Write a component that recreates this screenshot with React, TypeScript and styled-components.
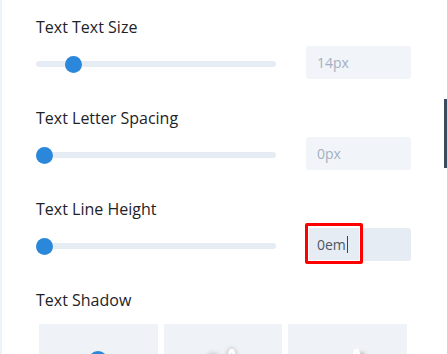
import React from 'react';
import styled, { createGlobalStyle } from 'styled-components';

const GlobalStyle = createGlobalStyle`
  html, body {
    margin: 0;
    padding: 0;
    overflow: hidden;
    background: #ffffff;
  }
`;

const Panel = styled.div`
  position: relative;
  width: 447px;
  height: 354px;
  box-sizing: border-box;
  padding: 17px 36px 0 36px;
  border-left: 2px solid #eaf3fc;
  font-family: "Open Sans", "Noto Sans", sans-serif;
  overflow: hidden;
`;

const Field = styled.div`
  margin-bottom: 29px;
  margin-left: -2px;
`;

const Label = styled.div`
  font-size: 16px;
  line-height: 20px;
  font-weight: 500;
  color: #1e2328;
`;

const Row = styled.div`
  display: flex;
  align-items: center;
  margin-top: 9px;
  gap: 30px;
`;

const Track = styled.div`
  position: relative;
  width: 240px;
  height: 6px;
  margin-top: 3px;
  border-radius: 3px;
  background: #e6ecf3;
`;

const Thumb = styled.div<{ $left: number }>`
  position: absolute;
  top: 50%;
  left: ${p => p.$left}px;
  width: 17px;
  height: 17px;
  margin-top: -8.5px;
  border-radius: 50%;
  background: #2b87da;
`;

const InputWrap = styled.div`
  position: relative;
`;

const Input = styled.div<{ $focused?: boolean }>`
  box-sizing: border-box;
  width: 105px;
  height: 33px;
  padding-left: 11px;
  display: flex;
  align-items: center;
  border-radius: 3px;
  font-size: 14px;
  background: ${p => (p.$focused ? '#e6ecf3' : '#f1f4f8')};
  color: ${p => (p.$focused ? '#4c5866' : '#a3b0c2')};
`;

const Caret = styled.span`
  display: inline-block;
  width: 1px;
  height: 17px;
  margin-left: 1px;
  background: #3a4450;
`;

// annotation box drawn over the focused input
const Highlight = styled.div`
  position: absolute;
  left: -1px;
  top: -5px;
  width: 58px;
  height: 41px;
  box-sizing: border-box;
  border: 3px solid #ff0000;
  box-shadow: inset 0 0 0 1px #ffffff;
  border-radius: 2px;
`;

const ShadowLabel = styled(Label)`
  margin-left: -2px;
`;

const Tiles = styled.div`
  display: grid;
  grid-template-columns: repeat(3, 1fr);
  gap: 6px;
  margin: 14px 4px 0 1px;
`;

const Tile = styled.div`
  height: 110px;
  background: #eff2f7;
  display: flex;
  justify-content: center;
  padding-top: 27px;
  box-sizing: border-box;
`;

const NoneIcon = styled.div`
  width: 20px;
  height: 20px;
  border: 3px solid #2b87da;
  border-radius: 50%;
  box-sizing: border-box;
`;

const Sample = styled.div<{ $shadow: string }>`
  font-size: 30px;
  line-height: 30px;
  font-weight: 600;
  color: #ffffff;
  margin-top: -6px;
  text-shadow: ${p => p.$shadow};
`;

const Scrollbar = styled.div`
  position: absolute;
  right: 0;
  top: 99px;
  width: 3px;
  height: 69px;
  background: #3b4a5c;
`;

const fields = [
  { label: 'Text Text Size', value: '14px', thumb: 29 },
  { label: 'Text Letter Spacing', value: '0px', thumb: 0 },
];

export default function App() {
  return (
    <>
      <GlobalStyle />
      <Panel>
        {fields.map(f => (
          <Field key={f.label}>
            <Label>{f.label}</Label>
            <Row>
              <Track>
                <Thumb $left={f.thumb} />
              </Track>
              <Input>{f.value}</Input>
            </Row>
          </Field>
        ))}
        <Field>
          <Label>Text Line Height</Label>
          <Row>
            <Track>
              <Thumb $left={0} />
            </Track>
            <InputWrap>
              <Input $focused>
                0em<Caret />
              </Input>
              <Highlight />
            </InputWrap>
          </Row>
        </Field>
        <ShadowLabel>Text Shadow</ShadowLabel>
        <Tiles>
          <Tile>
            <NoneIcon />
          </Tile>
          <Tile>
            <Sample $shadow="0 0 5px rgba(0,0,0,0.3)">aA</Sample>
          </Tile>
          <Tile>
            <Sample $shadow="5px 4px 4px rgba(0,0,0,0.35)">aA</Sample>
          </Tile>
        </Tiles>
        <Scrollbar />
      </Panel>
    </>
  );
}
